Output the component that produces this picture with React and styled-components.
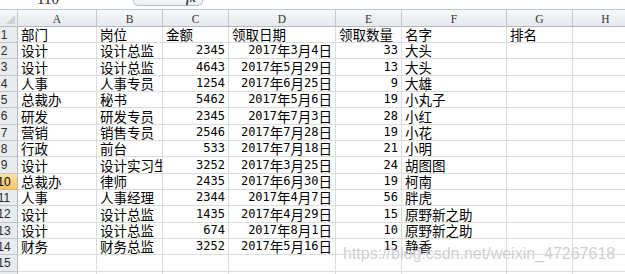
import React from "react";
import styled, { createGlobalStyle, css } from "styled-components";

const GlobalStyle = createGlobalStyle`
  html, body { margin: 0; padding: 0; background: #ffffff; overflow: hidden; }
  #root { width: 625px; height: 274px; }
`;

const COLS = "27px 79px 66px 66px 107px 66px 105px 66px 66px";
const GRID = "#dadcdd";
const HEAD_LINE = "#c3c7cd";

const Sheet = styled.div`
  position: relative;
  width: 625px;
  height: 274px;
  overflow: hidden;
  background: #fff;
  font-family: "Noto Sans CJK SC", sans-serif;
  color: #000;
`;

const TopBar = styled.div`
  height: 10px;
  box-sizing: border-box;
  display: flex;
  align-items: flex-start;
  border-bottom: 1px solid ${HEAD_LINE};
  overflow: hidden;
`;

const NameArea = styled.div`
  width: 133px;
  box-sizing: border-box;
  padding-left: 37px;
  font-family: "Liberation Serif", serif;
  font-size: 15px;
  line-height: 15px;
  margin-top: -8px;
  color: #222;
`;

const FxBox = styled.div`
  width: 70px;
  height: 6px;
  box-sizing: border-box;
  border: 1px solid #b9bec6;
  border-top: none;
  border-radius: 0 0 5px 5px;
  background: linear-gradient(#f7f8fa, #e9ecf0);
  display: flex;
  justify-content: flex-end;
  padding-right: 6px;
  overflow: hidden;
`;

const FxText = styled.span`
  font-family: "Liberation Serif", serif;
  font-style: italic;
  font-weight: bold;
  font-size: 12px;
  line-height: 12px;
  margin-top: -8px;
  color: #333;
`;

const Grid = styled.div`
  display: flex;
  flex-direction: column;
  margin-left: -9px;
`;

const Row = styled.div`
  display: grid;
  grid-template-columns: ${COLS};
  height: ${(p) => p.$h}px;
`;

const Cell = styled.div`
  box-sizing: border-box;
  border-right: 1px solid ${GRID};
  border-bottom: 1px solid ${GRID};
  padding: 0 3px;
  display: flex;
  align-items: center;
  justify-content: ${(p) => (p.$right ? "flex-end" : "flex-start")};
  overflow: hidden;
  white-space: nowrap;
  font-size: 13.5px;
  line-height: 15px;
`;

const ColHead = styled.div`
  box-sizing: border-box;
  border-right: 1px solid ${HEAD_LINE};
  border-bottom: 1px solid #b4b9c0;
  background: linear-gradient(#f7f8fa, #e6e9ed);
  display: flex;
  align-items: center;
  justify-content: center;
  font-family: "Liberation Serif", serif;
  font-size: 11.5px;
  color: #333;
  padding-top: 1px;
`;

const Corner = styled(ColHead)`
  justify-content: flex-end;
  align-items: flex-end;
  padding: 0 2px 2px 0;
`;

const RowHead = styled.div`
  box-sizing: border-box;
  border-right: 1px solid #b4b9c0;
  border-bottom: 1px solid ${HEAD_LINE};
  background: #e9ecef;
  display: flex;
  align-items: center;
  justify-content: center;
  font-family: "Liberation Sans", sans-serif;
  font-size: 12px;
  color: #2b2b2b;
  ${(p) =>
    p.$active &&
    css`
      background: linear-gradient(#fbe2a6, #f4c66c);
      border-bottom-color: #e9b45a;
      color: #000;
    `}
`;

const Lat = styled.span`
  font-family: "DejaVu Sans Mono", monospace;
  font-size: 12px;
`;

const Watermark = styled.div`
  position: absolute;
  left: 343px;
  top: 246px;
  font-family: "Liberation Sans", sans-serif;
  font-size: 16px;
  line-height: 16px;
  color: rgba(185, 185, 185, 0.7);
  text-shadow: 0 0 1px rgba(255, 255, 255, 0.9);
  white-space: nowrap;
  pointer-events: none;
`;

const renderText = (s) =>
  String(s)
    .split(/([\x00-\x7f]+)/)
    .filter(Boolean)
    .map((part, i) =>
      /^[\x00-\x7f]+$/.test(part) ? <Lat key={i}>{part}</Lat> : <React.Fragment key={i}>{part}</React.Fragment>
    );

const HEADER = ["部门", "岗位", "金额", "领取日期", "领取数量", "名字", "排名", ""];

const DATA = [
  ["设计", "设计总监", 2345, "2017年3月4日", 33, "大头"],
  ["设计", "设计总监", 4643, "2017年5月29日", 13, "大头"],
  ["人事", "人事专员", 1254, "2017年6月25日", 9, "大雄"],
  ["总裁办", "秘书", 5462, "2017年5月6日", 19, "小丸子"],
  ["研发", "研发专员", 2345, "2017年7月3日", 28, "小红"],
  ["营销", "销售专员", 2546, "2017年7月28日", 19, "小花"],
  ["行政", "前台", 533, "2017年7月18日", 21, "小明"],
  ["设计", "设计实习生", 3252, "2017年3月25日", 24, "胡图图"],
  ["总裁办", "律师", 2435, "2017年6月30日", 19, "柯南"],
  ["人事", "人事经理", 2344, "2017年4月7日", 56, "胖虎"],
  ["设计", "设计总监", 1435, "2017年4月29日", 15, "原野新之助"],
  ["设计", "设计总监", 674, "2017年8月1日", 10, "原野新之助"],
  ["财务", "财务总监", 3252, "2017年5月16日", 15, "静香"],
];

const LETTERS = ["A", "B", "C", "D", "E", "F", "G", "H"];
const RIGHT = [false, false, true, true, true, false, false, false];

const rowHeight = (i) => (i % 3 === 2 ? 17 : 16);

export default function App() {
  const rows = [
    HEADER,
    ...DATA.map((r) => [...r, "", ""]),
    ["", "", "", "", "", "", "", ""],
    ["", "", "", "", "", "", "", ""],
  ];
  return (
    <>
      <GlobalStyle />
      <Sheet>
        <TopBar>
          <NameArea>110</NameArea>
          <FxBox>
            <FxText>fx</FxText>
          </FxBox>
        </TopBar>
        <Grid>
          <Row $h={17}>
            <Corner>
              <svg width="9" height="9" viewBox="0 0 9 9">
                <polygon points="9,0 9,9 0,9" fill="#cdd1d6" />
              </svg>
            </Corner>
            {LETTERS.map((l) => (
              <ColHead key={l}>{l}</ColHead>
            ))}
          </Row>
          {rows.map((r, i) => (
            <Row key={i} $h={rowHeight(i)}>
              <RowHead $active={i + 1 === 10}>{i + 1}</RowHead>
              {r.map((v, j) => (
                <Cell key={j} $right={i > 0 && RIGHT[j]}>
                  {renderText(v)}
                </Cell>
              ))}
            </Row>
          ))}
        </Grid>
        <Watermark>https://blog.csdn.net/weixin_47267618</Watermark>
      </Sheet>
    </>
  );
}
